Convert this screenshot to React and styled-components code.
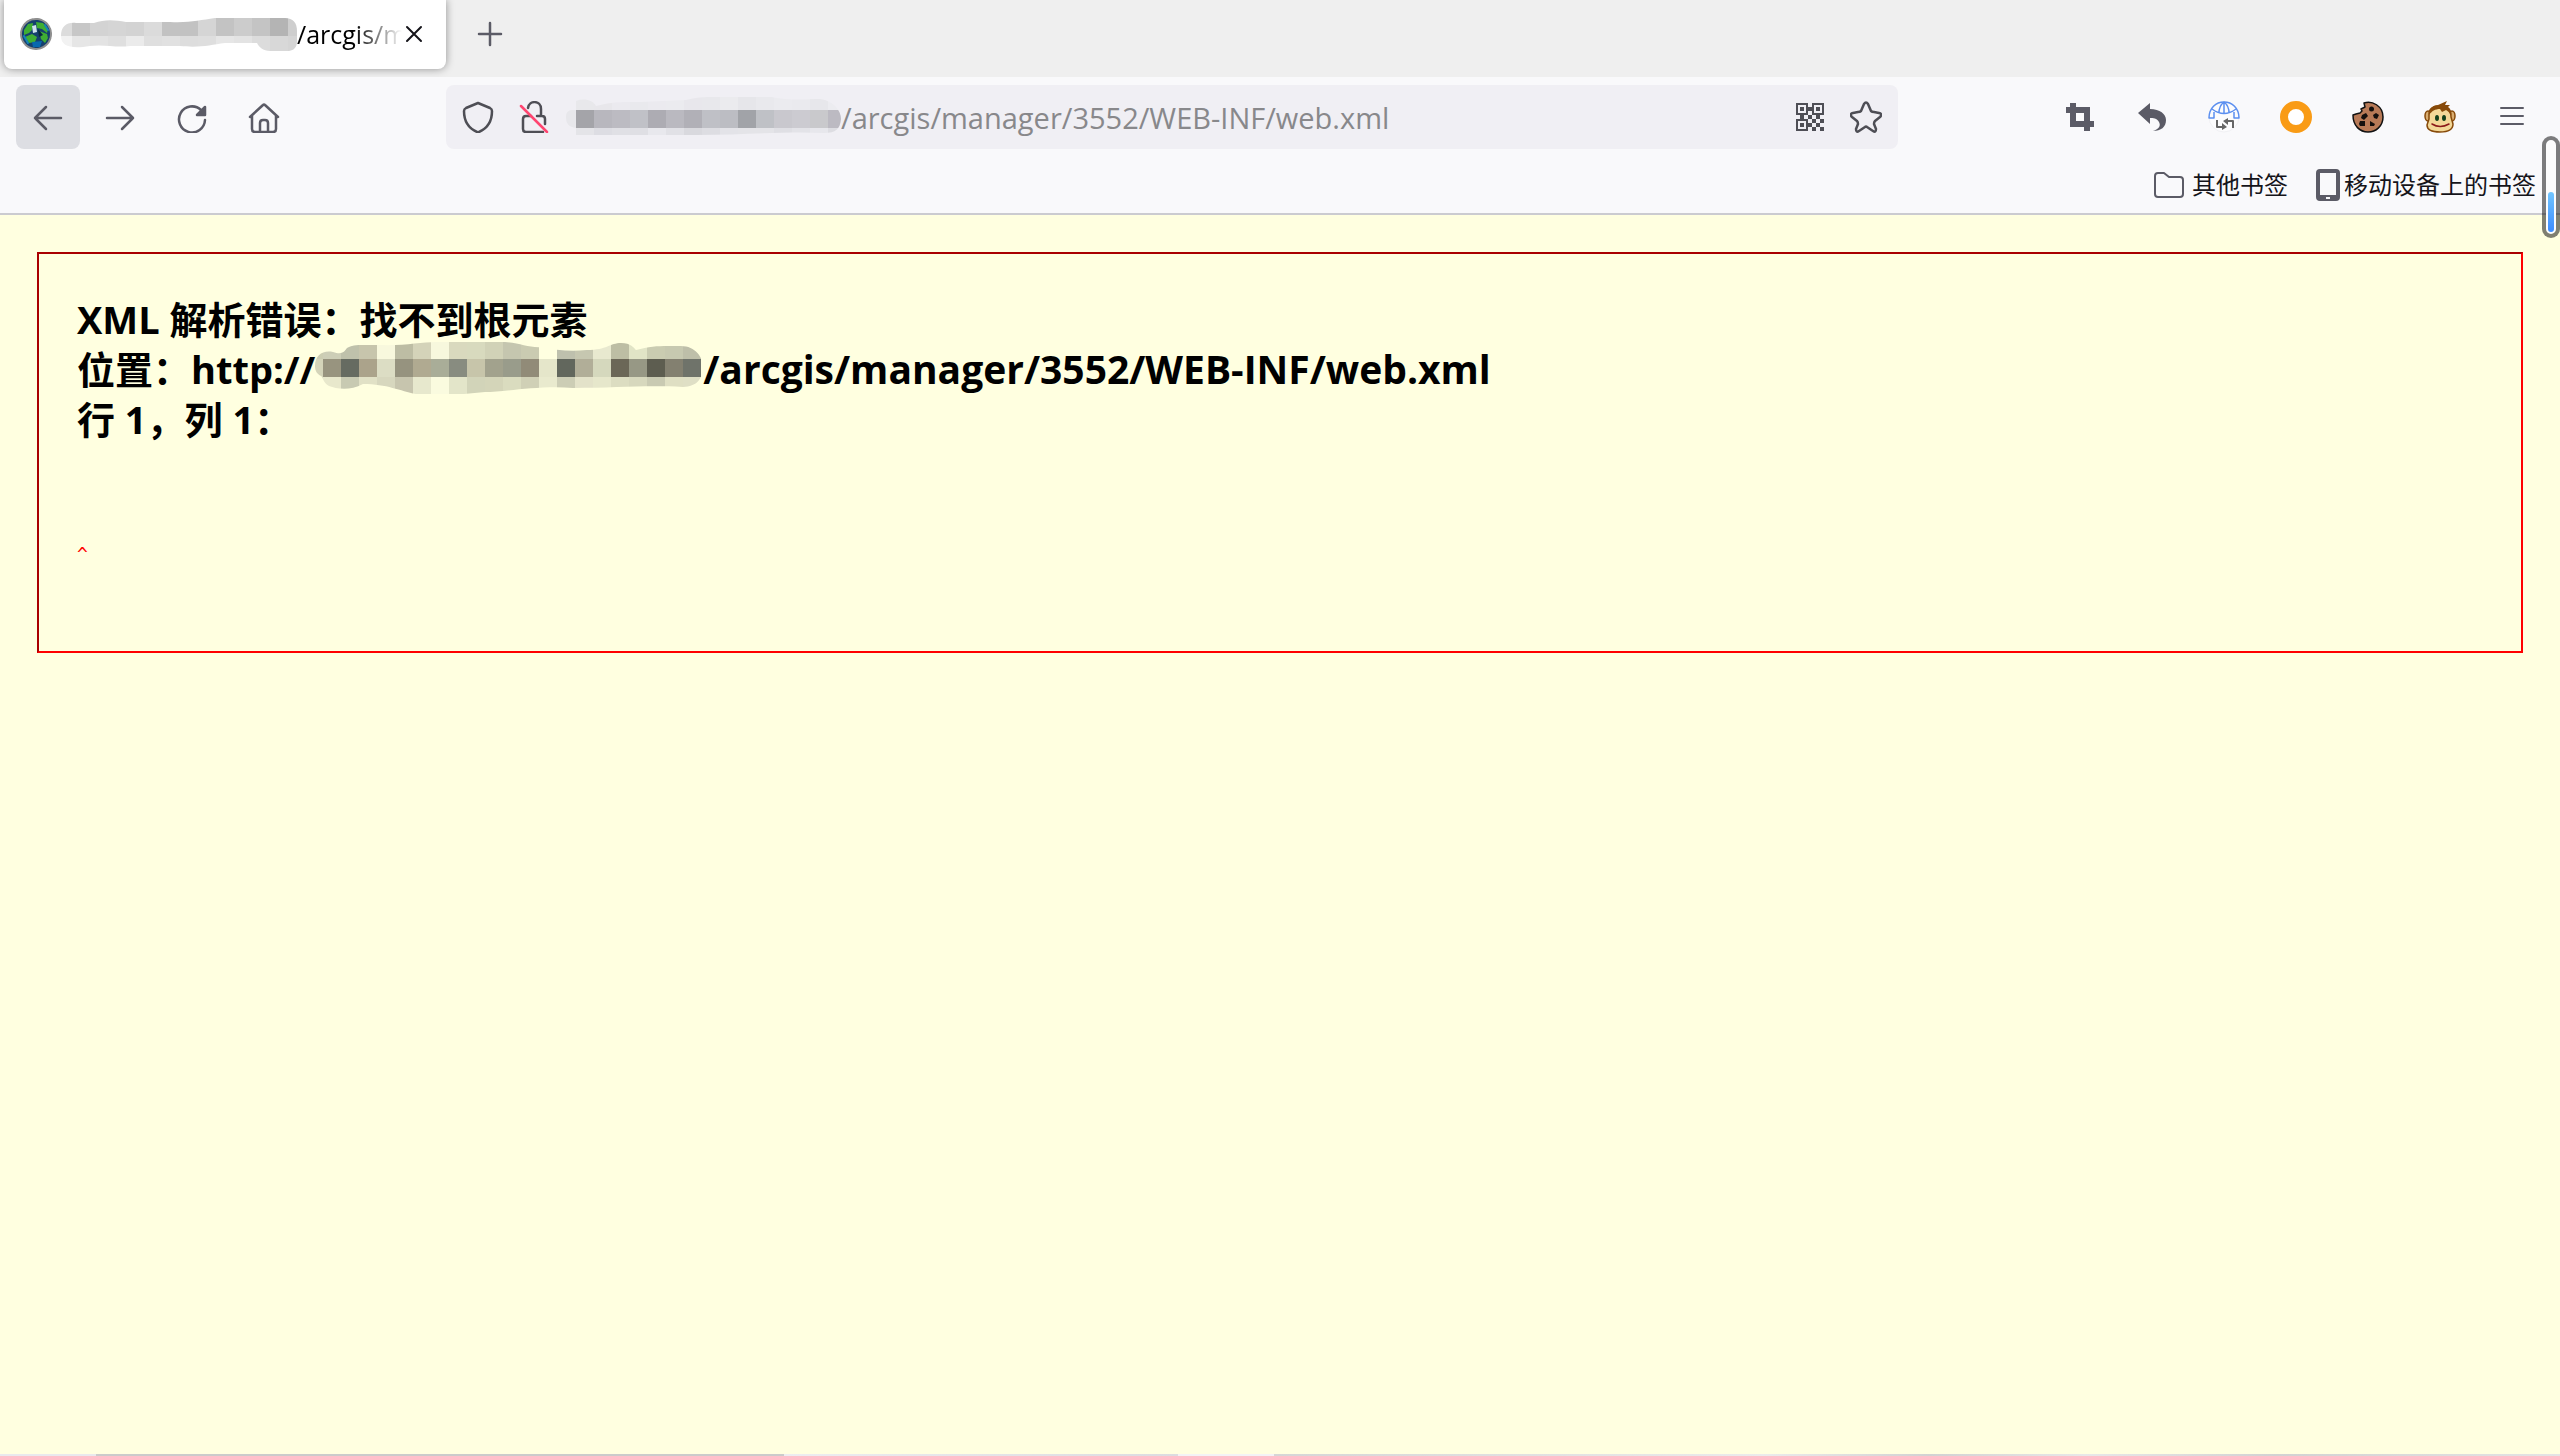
import React from "react";
import styled, { createGlobalStyle } from "styled-components";

const UI = `"Open Sans", "Noto Sans CJK SC", sans-serif`;
const INK = "#5b5b66";

const GlobalStyle = createGlobalStyle`
  *, *::before, *::after { box-sizing: border-box; }
  body { margin: 0; background: #ffffe0; font-family: ${UI}; color: #15141a; }
  button, input { font: inherit; color: inherit; }
`;

const Window = styled.div`
  position: relative;
  display: flex;
  flex-direction: column;
  min-height: 100vh;
`;

const TabBar = styled.div`
  display: flex;
  align-items: flex-start;
  height: 77px;
  padding-left: 4px;
  background: #efefef;
`;

const Tab = styled.div`
  display: flex;
  align-items: center;
  width: 442px;
  height: 69px;
  padding: 0 20px 2px 16px;
  background: #fff;
  border-radius: 0 0 8px 8px;
  box-shadow: 0 0 8px rgba(0, 0, 0, 0.4);
`;

const TabTitle = styled.div`
  display: flex;
  align-items: center;
  flex: 1;
  min-width: 0;
  margin-left: 8px;
  font-size: 25px;
  line-height: 40px;
  white-space: nowrap;
  color: #000;
  mask-image: linear-gradient(to right, #000 86%, transparent 100%);
`;

const PlainButton = styled.button`
  display: flex;
  align-items: center;
  justify-content: center;
  flex: none;
  width: ${(p) => p.$width || p.$size || 64}px;
  height: ${(p) => p.$size || 64}px;
  padding: 0;
  border: 0;
  border-radius: 8px;
  color: ${(p) => p.$color || INK};
  background: ${(p) => (p.$active ? "#dddee3" : "transparent")};
`;

const NewTab = styled(PlainButton)`
  margin-left: 12px;
  margin-top: 2px;
`;

const Toolbar = styled.div`
  display: grid;
  grid-template-columns: 430px minmax(0, 1452px) 1fr;
  align-items: center;
  height: 80px;
  padding: 0 16px;
  background: #f9f9fb;
`;

const ButtonGroup = styled.div`
  display: flex;
  gap: 8px;
  justify-content: ${(p) => (p.$end ? "flex-end" : "flex-start")};
`;

const AddressBar = styled.div`
  display: flex;
  align-items: center;
  height: 64px;
  padding-left: 4px;
  border-radius: 8px;
  background: #f0eff4;
`;

const Host = styled.div`
  padding-left: 4px;
`;

const AddressInput = styled.input`
  flex: 1;
  min-width: 0;
  height: 56px;
  padding: 0;
  border: 0;
  outline: 0;
  background: transparent;
  color: #88888b;
  font-size: 29px;
`;

const Bookmarks = styled.nav`
  display: flex;
  justify-content: flex-end;
  gap: 28px;
  height: 58px;
  padding: 0 24px 0 0;
  background: #f9f9fb;
  border-bottom: 2px solid #cbcbd0;
`;

const Bookmark = styled.a`
  display: flex;
  align-items: center;
  gap: ${(p) => p.$gap}px;
  height: 56px;
  font-size: 24px;
  line-height: 32px;
  color: #15141a;
  text-decoration: none;

  svg {
    color: ${INK};
  }
`;

const Content = styled.main`
  flex: 1;
  background: #ffffe0;
  padding: 37px;
`;

const ErrorBox = styled.section`
  min-height: 401px;
  padding: 40px 38px 0;
  border: 2px solid;
  border-color: #a90000 #f00 #f00 #a90000;
`;

const Message = styled.h1`
  margin: 0;
  color: #000;
  font-size: 38px;
  font-weight: 700;
  line-height: 50px;
`;

const MessageLine = styled.span`
  display: flex;
  align-items: center;
  height: 50px;
  white-space: pre;
`;

const Path = styled.span`
  font-size: 39px;
`;

const Source = styled.pre`
  margin: 94px 0 0;
  color: #f00;
  font-family: "DejaVu Sans Mono", monospace;
  font-size: 18px;
  line-height: 32px;
`;

const ScrollHint = styled.div`
  position: absolute;
  top: 136px;
  right: 0;
  display: flex;
  align-items: flex-end;
  width: 18px;
  height: 102px;
  padding: 2px;
  border: 4px solid rgba(0, 0, 0, 0.5);
  border-radius: 9px;
  background: #fcfcfc;
  background-clip: padding-box;
`;

const ScrollLevel = styled.div`
  width: 6px;
  height: 40px;
  border-radius: 3px;
  background: linear-gradient(#72c6ff, #3c8cff);
`;

const Edge = styled.div`
  display: flex;
  height: 2px;
`;

const EdgePart = styled.div`
  flex: ${(p) => p.$share} 1 0;
  background: ${(p) => p.$bg};
`;

const Svg = styled.svg`
  display: block;
  flex: none;
`;

function Icon({ children, w = 32, h = 32, sw = 2, fill = "none" }) {
  return (
    <Svg width={w} height={h} viewBox={`0 0 ${w} ${h}`} fill={fill} stroke={fill === "none" ? "currentColor" : "none"} strokeWidth={sw} strokeLinecap="round" strokeLinejoin="round" aria-hidden="true">
      {children}
    </Svg>
  );
}

/* Pixelated strip hiding the host name. rows: [y, height, colours[]] */
function Mosaic({ id, w, h, cell, offset, rows, outline }) {
  return (
    <Svg width={w} height={h} viewBox={`0 0 ${w} ${h}`} aria-hidden="true">
      <clipPath id={id}><path d={outline} /></clipPath>
      <g clipPath={`url(#${id})`} shapeRendering="crispEdges">
        {rows.map(([y, rh, colors]) =>
          colors.map((c, i) => (
            <rect key={`${y}-${i}`} x={i === 0 ? 0 : offset + (i - 1) * cell} y={y} width={i === 0 ? offset : cell} height={rh} fill={c} />
          ))
        )}
      </g>
    </Svg>
  );
}

const tabMosaic = {
  id: "host-tab", w: 237, h: 34, cell: 18, offset: 12,
  outline: "M1 19C1 9 7 5 16 6L34 6C45 2 55 3 66 5L110 5C130 6 140 3 155 1L225 1C233 1 237 6 237 14V24C237 33 231 35 222 34L210 34C203 34 199 30 197 26L165 26C150 28 140 31 120 29L70 29C55 31 45 27 30 29C12 32 1 30 1 19Z",
  rows: [
    [0, 19, ["#dcdcdc", "#c7c7c7", "#d3d3d3", "#d5d5d5", "#d3d3d3", "#dbdbdb", "#c2c2c2", "#c2c2c2", "#d5d5d5", "#c3c3c3", "#cccccc", "#c4c4c4", "#b4b4b4", "#cecece"]],
    [19, 21, ["#f2f2f2", "#e6e6e6", "#e3e3e3", "#dfdfdf", "#ebebeb", "#dfdfdf", "#e1e1e1", "#dddddd", "#dedede", "#e6e6e6", "#e3e3e3", "#dcdcdc", "#d8d8d8", "#d5d5d5"]],
  ],
};

const urlMosaic = {
  id: "host-url", w: 275, h: 40, cell: 18, offset: 10,
  outline: "M0 20C0 13 4 13 10 13V4C18 1 27 3 30 9C47 4 60 5 75 5L120 3C135 -1 150 0 165 0H205C225 4 240 2 254 2C268 4 275 14 275 22C274 32 270 36 258 36C220 34 180 38 130 38H10V31C3 30 0 27 0 20Z",
  rows: [
    [0, 13, ["#e8e8ec", "#e8e8eb", "#e8e7eb", "#ebeaef", "#e9e9ed", "#ebeaef", "#ebebef", "#e8e7ec", "#e8e8ec", "#ebebee", "#e6e6ea", "#e9e9ed", "#ebebef", "#eaeaee", "#e7e7eb", "#ececf0"]],
    [13, 18, ["#e7e7eb", "#a4a4a9", "#b8b7be", "#bcbbc2", "#c0c1c7", "#adacb3", "#bab9c0", "#b1b0b7", "#bfc0c6", "#bcbdc3", "#a1a3a8", "#bfc1c6", "#c9c8ce", "#cccbd1", "#c9c9cc", "#bcbac2"]],
    [31, 9, ["#eeeeee", "#e4e4e8", "#dddde3", "#e0e0e5", "#dfdfe4", "#e8e8ed", "#e1e1e6", "#d9d9de", "#dddde2", "#e3e3e8", "#e4e4e8", "#e4e4e8", "#dfdfe4", "#e3e3e8", "#e7e7ec", "#dddde2"]],
  ],
};

const bodyMosaic = {
  id: "host-body", w: 388, h: 54, cell: 18, offset: 8,
  outline: "M0 24C0 13 8 8 18 10C27 13 29 10 32 6C38 2 46 3 64 3C90 4 105 0 122 0H190C205 1 214 6 227 5C240 8 255 10 272 8C292 8 295 1 306 1C316 1 319 6 321 8C338 3 350 4 364 4C380 3 388 15 388 25C387 38 382 44 368 45C330 43 300 46 258 46C225 43 190 50 170 50L149 52H101C85 49 72 42 48 42C35 49 22 47 14 44C8 41 8 35 6 34C2 32 0 29 0 24Z",
  rows: [
    [0, 17, ["#cccdb2", "#cdceb7", "#bfc1ab", "#c7c5ac", "#f8f8dd", "#bdbda4", "#d4d3b9", "#f7f8dd", "#d9d9be", "#d8dabe", "#d1d2b7", "#c5c6af", "#cacbb1", "#ffffe0", "#bec0ad", "#c6c7b0", "#e8e9cf", "#bdbea4", "#e1e4c6", "#caccb1", "#c7c9b0", "#bebfa9"]],
    [17, 18, ["#d4d4b9", "#98947f", "#666b61", "#aba38b", "#dcddc4", "#96937f", "#b0aa91", "#a9ad98", "#888c80", "#c7c5aa", "#a2a28d", "#999c8b", "#918b78", "#e5e6ca", "#62675d", "#b1ae98", "#d5d8bd", "#6b6757", "#979885", "#5d5d50", "#838070", "#6f736a"]],
    [35, 19, ["#dcddc4", "#e8e8cc", "#c8cab2", "#e1e1c6", "#d7d7be", "#c7c5ae", "#e7e8cd", "#fafbdf", "#e3e5c9", "#d2d4b9", "#d4d5b9", "#dadcbf", "#d0d0b6", "#e9eace", "#cccdb5", "#e3e2c9", "#e6e7cb", "#dcddc1", "#d7d8bd", "#c9cab2", "#dfdfc3", "#dfdfc5"]],
  ],
};

const Favicon = () => (
  <Icon fill="#1b5e9b">
    <circle cx="16" cy="16" r="15" fill="#15406e" stroke="#8f8f8f" strokeWidth="2" strokeDasharray="3 1" />
    <path d="M4 12L8 6L13 5L12 12L9 15L4 17ZM16 4L23 5L28 11L27 15L22 11L17 10ZM19 13L27 16L28 20L25 25L21 21ZM5 19L12 16L17 19L15 24L9 25Z" fill="#3fae33" />
    <path d="M12 24L22 23L20 29L13 29Z" fill="#0868ae" />
    <path d="M12 8L16 7L17 14L13 15Z" fill="#cfe2ee" />
    <path d="M18 11L23 17L19 19Z" fill="#082a3d" />
    <path d="M4 18L8 25M25 7L28 12" stroke="#1583b7" strokeWidth="2" />
  </Icon>
);

const Globe = () => (
  <Icon>
    <circle cx="16" cy="16" r="15" fill="#fcfcfd" stroke="#f1f1f4" strokeWidth="1" />
    <g stroke="#5b8ff0" strokeWidth="1.500" strokeLinecap="butt">
      <path d="M6 11V17H1C1 7 8 1 16 1S31 7 31 17H26V11" />
      <path d="M4 8Q16 17 28 8M16 1V13M16 1C12 4 11 8 11 12M16 1C20 4 21 8 21 12" />
    </g>
    <path d="M9 19V26H15M25 27V20H19" stroke="#666" strokeLinecap="butt" />
    <path d="M14 22L19 26L14 29ZM20 17L15 20L20 24Z" fill="#666" stroke="none" />
  </Icon>
);

const Cookie = () => (
  <Icon>
    <path d="M12 2C20 -1 31 5 31 16C31 25 24 31 16 31C8 31 1 25 1 14L4 13L8 12L10 10L9 8L13 6Z" fill="#b87a57" stroke="#111" strokeWidth="1.500" />
    <g fill="#15100e" stroke="none">
      <circle cx="19.500" cy="8" r="2.500" />
      <path d="M10 14L14 12L16 15L12 19L9 17Z" />
      <path d="M21 14L24 12L27 14L25 18L22 17Z" />
      <path d="M8 20L13 20L13 25L8 25L7 23Z" />
      <path d="M18 20L23 23L22 25L18 25Z" />
    </g>
  </Icon>
);

const Monkey = () => (
  <Icon>
    <ellipse cx="4" cy="15" rx="3" ry="5" fill="#d9ad70" stroke="#874a0a" strokeWidth="1.500" />
    <ellipse cx="28" cy="15" rx="3" ry="5" fill="#d9ad70" stroke="#874a0a" strokeWidth="1.500" />
    <path d="M5 13C5 8 9 5 15 5C23 5 27 9 27 16L29 23C29 29 24 31 16 31C8 31 3 29 3 24L5 18Z" fill="#f3d898" stroke="#874a0a" strokeWidth="1.500" />
    <path d="M5 14C5 8 9 4 14 4L23 0L21 4L26 4L24 6C27 8 28 12 27 15C26 12 24 10 22 9L18 11L16 8C11 8 8 10 5 14Z" fill="#874a0a" stroke="none" />
    <ellipse cx="13" cy="17" rx="2" ry="3" fill="#123f1b" stroke="none" />
    <ellipse cx="20" cy="17" rx="2" ry="3" fill="#123f1b" stroke="none" />
    <path d="M8 23Q16 28 25 23" stroke="#8b1a1a" strokeWidth="1.500" />
  </Icon>
);

const QrCode = () => (
  <Icon fill="#4e4e55">
    <path fillRule="evenodd" d="M2 2h12v12H2zM4 4v8h8V4zM6 6h4v4H6zM18 2h12v12H18zM20 4v8h8V4zM22 6h4v4h-4zM2 18h12v12H2zM4 20v8h8v-8zM6 22h4v4H6z" />
    <path d="M14 6h4v4h-4zM6 14h4v4H6zM14 14h4v4h-4zM22 14h4v4h-4zM18 18h4v4h-4zM26 18h4v4h-4zM14 22h4v4h-4zM22 22h4v4h-4zM18 26h4v4h-4zM26 26h4v4h-4z" />
  </Icon>
);

export default function App() {
  return (
    <Window>
      <GlobalStyle />
      <TabBar>
        <Tab>
          <Favicon />
          <TabTitle>
            <Mosaic {...tabMosaic} />
            /arcgis/m
          </TabTitle>
          <PlainButton $size={24} $color="#15141a" aria-label="关闭标签页">
            <Icon w={24} h={24}><path d="M5 5L19 19M19 5L5 19" /></Icon>
          </PlainButton>
        </Tab>
        <NewTab aria-label="新建标签页">
          <Icon sw={2.5}><path d="M16 5V27M5 16H27" /></Icon>
        </NewTab>
      </TabBar>

      <Toolbar>
        <ButtonGroup>
          <PlainButton $active aria-label="后退">
            <Icon sw={2.5}><path d="M14 6L3 17L14 28M3 17H29" /></Icon>
          </PlainButton>
          <PlainButton aria-label="前进">
            <Icon sw={2.5}><path d="M18 6L29 17L18 28M29 17H3" /></Icon>
          </PlainButton>
          <PlainButton aria-label="刷新">
            <Icon sw={2.5}>
              <path d="M29 19A13 13 0 1 1 25 9" />
              <path d="M29 6V14H21Z" fill="currentColor" />
            </Icon>
          </PlainButton>
          <PlainButton aria-label="主页">
            <Icon sw={2.5}>
              <path d="M2 16L15 4Q16 3 17 4L30 16M4 15V28Q4 31 7 31H25Q28 31 28 28V15M12 31V22Q12 19 15 19H17Q20 19 20 22V31" />
            </Icon>
          </PlainButton>
        </ButtonGroup>

        <AddressBar>
          <PlainButton $size={56} $color="#4e4e55" aria-label="跟踪保护">
            <Icon sw={2.5}><path d="M16 2L28 7Q30 8 30 10C30 20 26 27 17 31Q16 32 15 31C6 27 2 20 2 10Q2 8 4 7Z" /></Icon>
          </PlainButton>
          <PlainButton $size={56} $color="#4e4e55" aria-label="连接不安全">
            <Icon sw={2.5}>
              <path d="M10 7C11 -1 23 -1 23 8V15M19 15H24Q27 15 27 18V23M8 15Q5 15 5 18V28Q5 31 8 31H25M8 15H13" />
              <path d="M3 5L29 31" stroke="#ff4570" />
            </Icon>
          </PlainButton>
          <Host><Mosaic {...urlMosaic} /></Host>
          <AddressInput aria-label="地址" defaultValue="/arcgis/manager/3552/WEB-INF/web.xml" />
          <PlainButton $width={48} $size={56} aria-label="二维码"><QrCode /></PlainButton>
          <PlainButton $size={64} $color="#4e4e55" aria-label="添加书签">
            <Icon sw={2.5}>
              <path d="M14 3Q16 0 18 3L21 10Q22 11 24 11L29 12Q33 13 30 16L25 20Q24 21 24 23L26 28Q26 32 23 30L17 26Q16 25 15 26L9 30Q6 32 6 28L8 23Q8 21 7 20L2 16Q-1 13 3 12L8 11Q10 11 11 10Z" />
            </Icon>
          </PlainButton>
        </AddressBar>

        <ButtonGroup $end>
          <PlainButton aria-label="截图">
            <Icon fill="currentColor"><path fillRule="evenodd" d="M6 2h6v4h14v14h4v6h-4v4h-6v-4H6V12H2V6h4zM12 12v8h8v-8z" /></Icon>
          </PlainButton>
          <PlainButton aria-label="撤销">
            <Icon fill="currentColor"><path d="M2 12L14 2V8C24 8 30 13 30 19C30 26 25 30 17 30C23 28 25 25 23 21C21 17 17 17 14 17V23Z" /></Icon>
          </PlainButton>
          <PlainButton aria-label="代理"><Globe /></PlainButton>
          <PlainButton aria-label="圆环">
            <Icon fill="#f99b15"><circle cx="16" cy="16" r="12" fill="#fff" stroke="#f99b15" strokeWidth="8" /></Icon>
          </PlainButton>
          <PlainButton aria-label="Cookie"><Cookie /></PlainButton>
          <PlainButton aria-label="脚本"><Monkey /></PlainButton>
          <PlainButton aria-label="菜单">
            <Icon><path d="M5 7H27M5 15H27M5 23H27" /></Icon>
          </PlainButton>
        </ButtonGroup>
      </Toolbar>

      <Bookmarks>
        <Bookmark href="#other" $gap={8}>
          <Icon w={30} h={26}>
            <path d="M1 22V4Q1 1 4 1H10L15 5H26Q29 5 29 8V22Q29 25 26 25H4Q1 25 1 22Z" />
          </Icon>
          其他书签
        </Bookmark>
        <Bookmark href="#mobile" $gap={4}>
          <Icon w={24} h={32} fill={INK}>
            <path fillRule="evenodd" d="M4 0H20Q24 0 24 4V28Q24 32 20 32H4Q0 32 0 28V4Q0 0 4 0ZM4 4V26H20V4ZM10 28V30H14V28Z" />
          </Icon>
          移动设备上的书签
        </Bookmark>
      </Bookmarks>

      <Content>
        <ErrorBox>
          <Message>
            <MessageLine>XML 解析错误：找不到根元素</MessageLine>
            <MessageLine>
              位置：http://
              <Mosaic {...bodyMosaic} />
              <Path>/arcgis/manager/3552/WEB-INF/web.xml</Path>
            </MessageLine>
            <MessageLine>行 1，列 1：</MessageLine>
          </Message>
          <Source>^</Source>
        </ErrorBox>
      </Content>

      <Edge>
        <EdgePart $share={96} $bg="#e9e9ed" />
        <EdgePart $share={688} $bg="#cbcbcb" />
        <EdgePart $share={394} $bg="linear-gradient(to right, #ededf0, #dcdce0)" />
        <EdgePart $share={96} $bg="#f3f3f5" />
        <EdgePart $share={1286} $bg="linear-gradient(to right, #d6d6d6, #ebebeb 38%, #d2d2d2 51%, #e8e8e8 63%, #d2d2d2 78%, #e4e4e4)" />
      </Edge>

      <ScrollHint><ScrollLevel /></ScrollHint>
    </Window>
  );
}
